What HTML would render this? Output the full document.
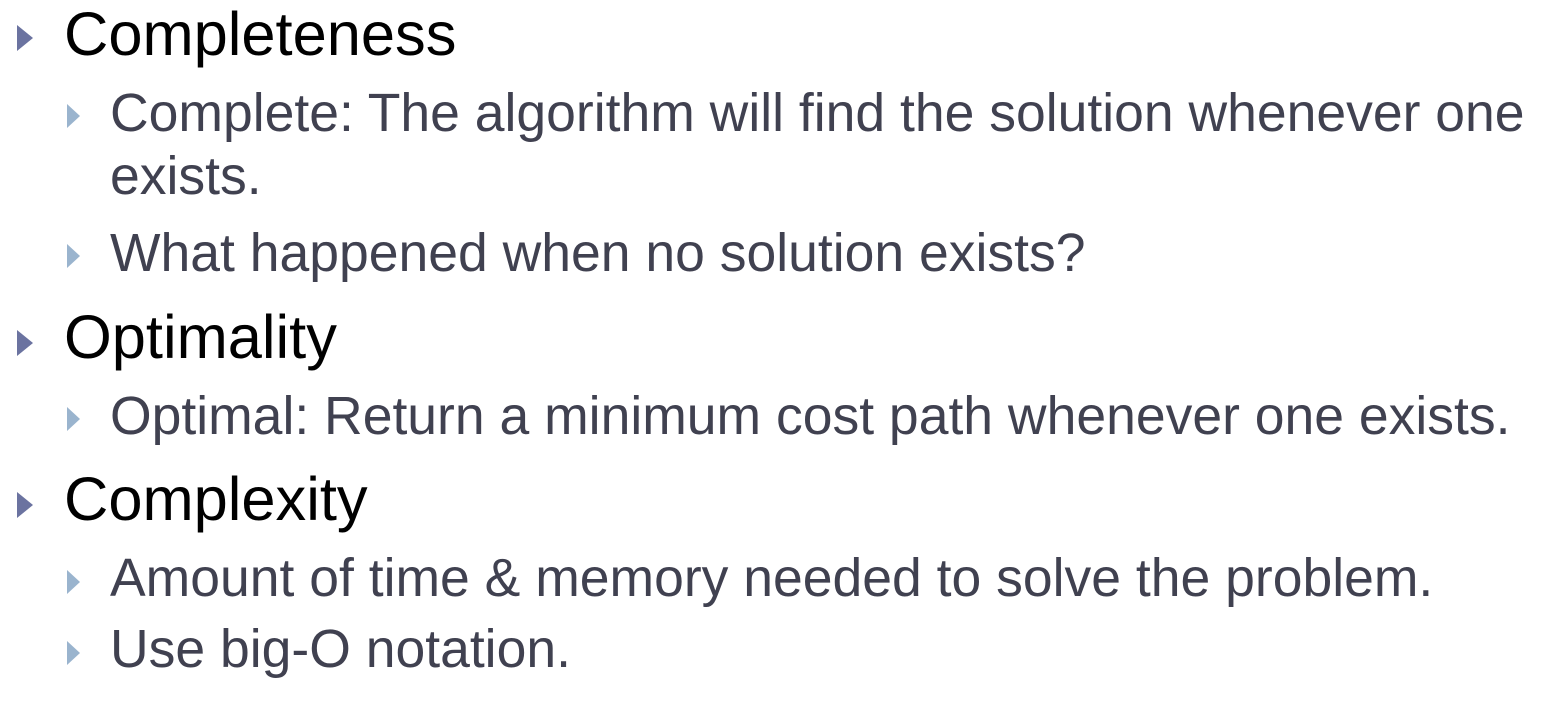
<!DOCTYPE html>
<html><head><style>
body{margin:0;width:1559px;height:703px;background:#fff;position:relative;overflow:hidden;font-family:"Liberation Sans",sans-serif}
.t{position:absolute;white-space:nowrap;line-height:1}
.l1{font-size:61.4px;color:#000;left:64px}
.l2{font-size:53.5px;color:#404150;left:110px}
.b1{position:absolute;left:17px;width:0;height:0;border-top:13px solid transparent;border-bottom:13px solid transparent;border-left:16px solid #6b73a0}
.b2{position:absolute;left:67px;width:0;height:0;border-top:12px solid transparent;border-bottom:12px solid transparent;border-left:13px solid #9ab4ce}
</style></head><body>
<div class="b1" style="top:25px"></div><div class="t l1" style="top:4px">Completeness</div>
<div class="b2" style="top:104px"></div><div class="t l2" style="top:87px">Complete: The algorithm will find the solution whenever one</div>
<div class="t l2" style="top:150px">exists.</div>
<div class="b2" style="top:244px"></div><div class="t l2" style="top:227px">What happened when no solution exists?</div>
<div class="b1" style="top:330px"></div><div class="t l1" style="top:307px">Optimality</div>
<div class="b2" style="top:407px"></div><div class="t l2" style="top:390px">Optimal: Return a minimum cost path whenever one exists.</div>
<div class="b1" style="top:492px"></div><div class="t l1" style="top:469px">Complexity</div>
<div class="b2" style="top:570px"></div><div class="t l2" style="top:552px">Amount of time &amp; memory needed to solve the problem.</div>
<div class="b2" style="top:641px"></div><div class="t l2" style="top:623px">Use big-O notation.</div>
</body></html>
